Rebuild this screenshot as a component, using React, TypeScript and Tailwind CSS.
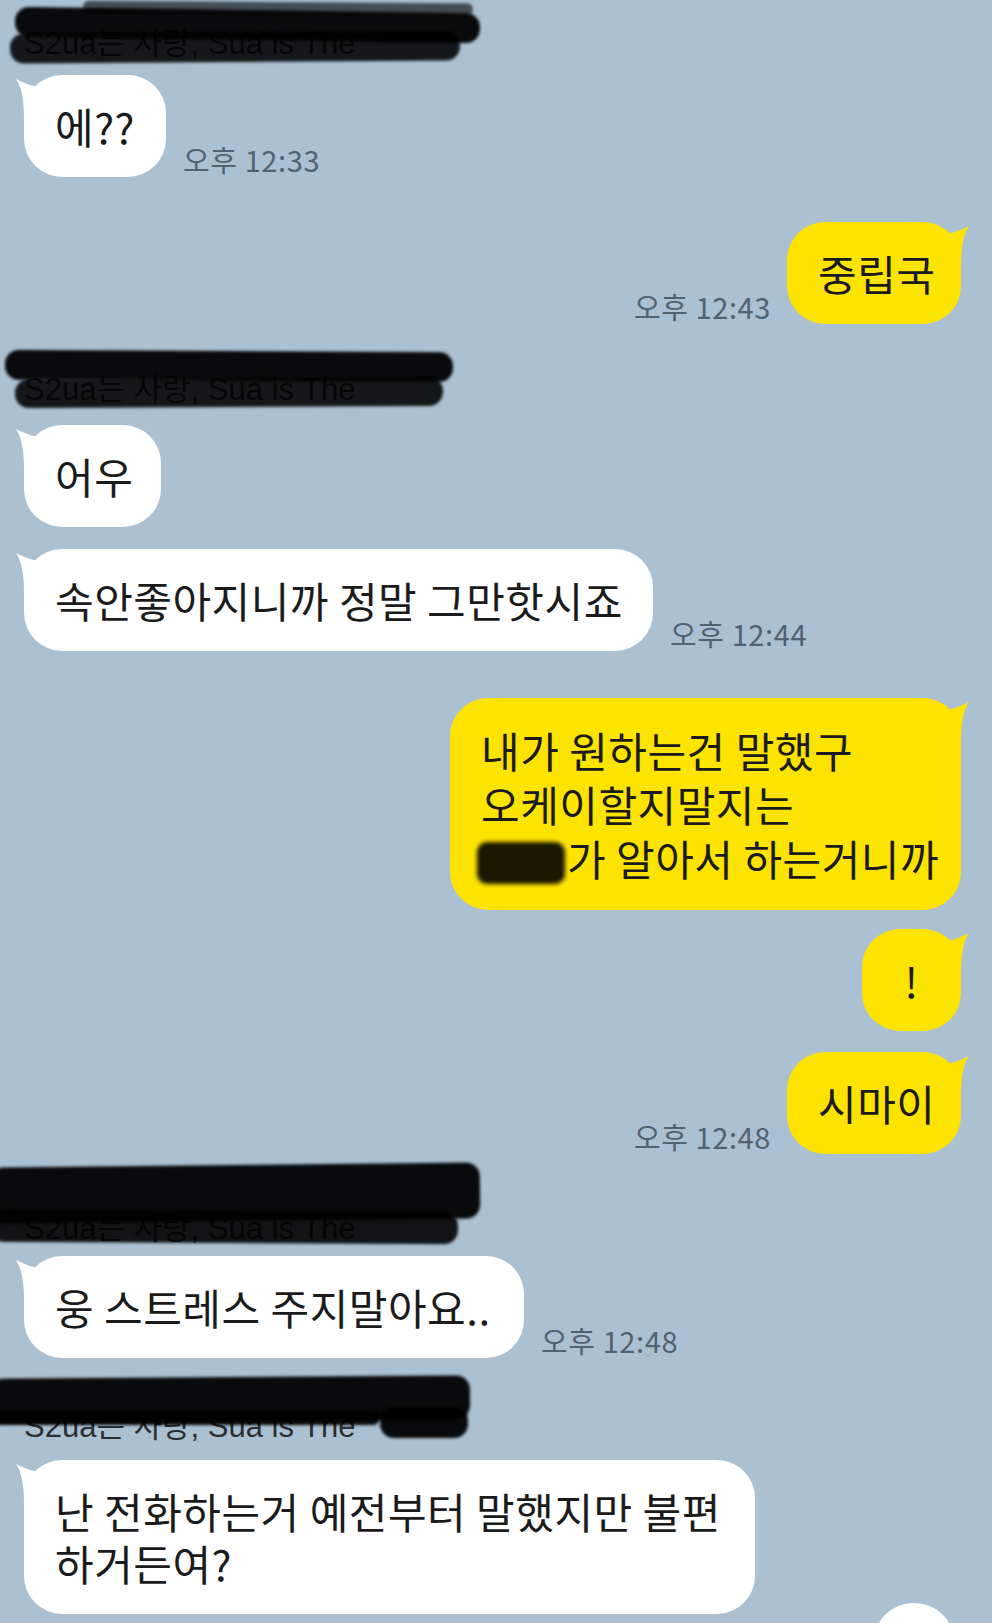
import React from "react";

type Stroke = { l: number; t: number; w: number; h: number; r?: number; o?: string };

const names: { h: number; textTop: number; strokes: Stroke[] }[] = [
  {
    h: 52,
    textTop: 20,
    strokes: [
      { l: 83, t: -8, w: 390, h: 12, r: 0.4, o: "bg-black/60" },
      { l: 15, t: 0, w: 465, h: 30, r: 0.8 },
      { l: 10, t: 22, w: 450, h: 30, r: -0.4, o: "bg-black/[0.88]" },
    ],
  },
  {
    h: 57,
    textTop: 26,
    strokes: [
      { l: 5, t: 1, w: 448, h: 30, r: 0.3 },
      { l: 15, t: 28, w: 428, h: 29, r: -0.3, o: "bg-black/[0.88]" },
    ],
  },
  {
    h: 80,
    textTop: 50,
    strokes: [
      { l: -10, t: 0, w: 490, h: 56, r: -0.6 },
      { l: -10, t: 46, w: 468, h: 32, r: 0.3, o: "bg-black/[0.9]" },
    ],
  },
  {
    h: 65,
    textTop: 36,
    strokes: [
      { l: -10, t: 0, w: 480, h: 44, r: -0.4 },
      { l: -10, t: 34, w: 390, h: 14, r: 0 },
      { l: 380, t: 30, w: 88, h: 31, r: 0 },
    ],
  },
];

function NameRow({ idx, className }: { idx: number; className: string }) {
  const n = names[idx];
  return (
    <div className={`relative ${className}`} style={{ height: n.h }}>
      <div
        className="absolute left-[24px] font-['Liberation_Sans','Noto_Sans_CJK_KR',sans-serif] text-[31px] leading-[28px] text-[#2b2f33] whitespace-nowrap"
        style={{ top: n.textTop }}
      >
        S2ua는 사랑, Sua is The
      </div>
      {n.strokes.map((s, i) => (
        <div
          key={i}
          className={`absolute rounded-[14px] blur-[1.5px] ${s.o ?? "bg-black/[0.95]"}`}
          style={{ left: s.l, top: s.t, width: s.w, height: s.h, transform: `rotate(${s.r ?? 0}deg)` }}
        />
      ))}
    </div>
  );
}

function Tail({ side, fill }: { side: "in" | "out"; fill: string }) {
  if (side === "in") {
    return (
      <svg className="absolute -left-[8px] top-0" width="24" height="44" viewBox="0 0 24 44">
        <path d="M0 4 Q9 9 22 12 L22 44 L8 44 Q8 15 0 4 Z" fill={fill} />
      </svg>
    );
  }
  return (
    <svg className="absolute -right-[8px] top-0" width="24" height="44" viewBox="0 0 24 44">
      <path d="M24 4 Q15 9 2 12 L2 44 L16 44 Q16 15 24 4 Z" fill={fill} />
    </svg>
  );
}

function Bubble({
  side,
  w,
  lh = 52,
  children,
}: {
  side: "in" | "out";
  w: number;
  lh?: number;
  children: React.ReactNode;
}) {
  const fill = side === "in" ? "#ffffff" : "#fde300";
  return (
    <div
      className={`relative rounded-[38px] px-[31px] py-[25px] text-[42px] tracking-[0.5px] text-[#1b1b1b] whitespace-nowrap ${
        side === "in" ? "bg-white" : "bg-[#fde300]"
      }`}
      style={{ width: w, lineHeight: `${lh}px` }}
    >
      <Tail side={side} fill={fill} />
      <div className="relative">{children}</div>
    </div>
  );
}

function Time({ t }: { t: string }) {
  return (
    <span className="text-[29px] tracking-[0.6px] leading-none pb-[3px] text-[#52626f] whitespace-nowrap">{t}</span>
  );
}

function InRow({ w, time, lh, children, className }: { w: number; time?: string; lh?: number; children: React.ReactNode; className: string }) {
  return (
    <div className={`flex items-end gap-[17px] pl-[24px] ${className}`}>
      <Bubble side="in" w={w} lh={lh}>
        {children}
      </Bubble>
      {time && <Time t={time} />}
    </div>
  );
}

function OutRow({ w, time, lh, children, className }: { w: number; time?: string; lh?: number; children: React.ReactNode; className: string }) {
  return (
    <div className={`flex items-end justify-end gap-[16px] pr-[31px] ${className}`}>
      {time && <Time t={time} />}
      <Bubble side="out" w={w} lh={lh}>
        {children}
      </Bubble>
    </div>
  );
}

export default function App() {
  return (
    <div className="relative w-[992px] h-[1623px] overflow-hidden bg-[#abc1d2]">
      <div className="flex flex-col font-['Noto_Sans_CJK_KR','Noto_Sans',sans-serif]">
        <NameRow idx={0} className="mt-[10px]" />
        <InRow w={142} time="오후 12:33" className="mt-[13px]">
          에??
        </InRow>
        <OutRow w={174} time="오후 12:43" className="mt-[45px]">
          중립국
        </OutRow>
        <NameRow idx={1} className="mt-[26px]" />
        <InRow w={137} className="mt-[18px]">
          어우
        </InRow>
        <InRow w={629} time="오후 12:44" className="mt-[22px]">
          속안좋아지니까 정말 그만핫시죠
        </InRow>
        <OutRow w={511} lh={54} className="mt-[47px]">
          내가 원하는건 말했구
          <br />
          오케이할지말지는
          <br />
          <span className="inline-block align-[-8px] -ml-[4px] mr-[2px] h-[42px] w-[88px] rounded-[10px] bg-black/90 blur-[2px]" />
          가 알아서 하는거니까
        </OutRow>
        <OutRow w={99} className="mt-[19px]">
          <div className="text-center">!</div>
        </OutRow>
        <OutRow w={174} time="오후 12:48" className="mt-[21px]">
          시마이
        </OutRow>
        <NameRow idx={2} className="mt-[11px]" />
        <InRow w={500} time="오후 12:48" className="mt-[11px]">
          웅 스트레스 주지말아요..
        </InRow>
        <NameRow idx={3} className="mt-[19px]" />
        <InRow w={731} lh={52} className="mt-[18px]">
          난 전화하는거 예전부터 말했지만 불편
          <br />
          하거든여?
        </InRow>
      </div>
      {/* scroll-down button peeking at the bottom */}
      <div className="absolute left-[873px] top-[1603px] w-[82px] h-[82px] rounded-full bg-white" />
    </div>
  );
}
